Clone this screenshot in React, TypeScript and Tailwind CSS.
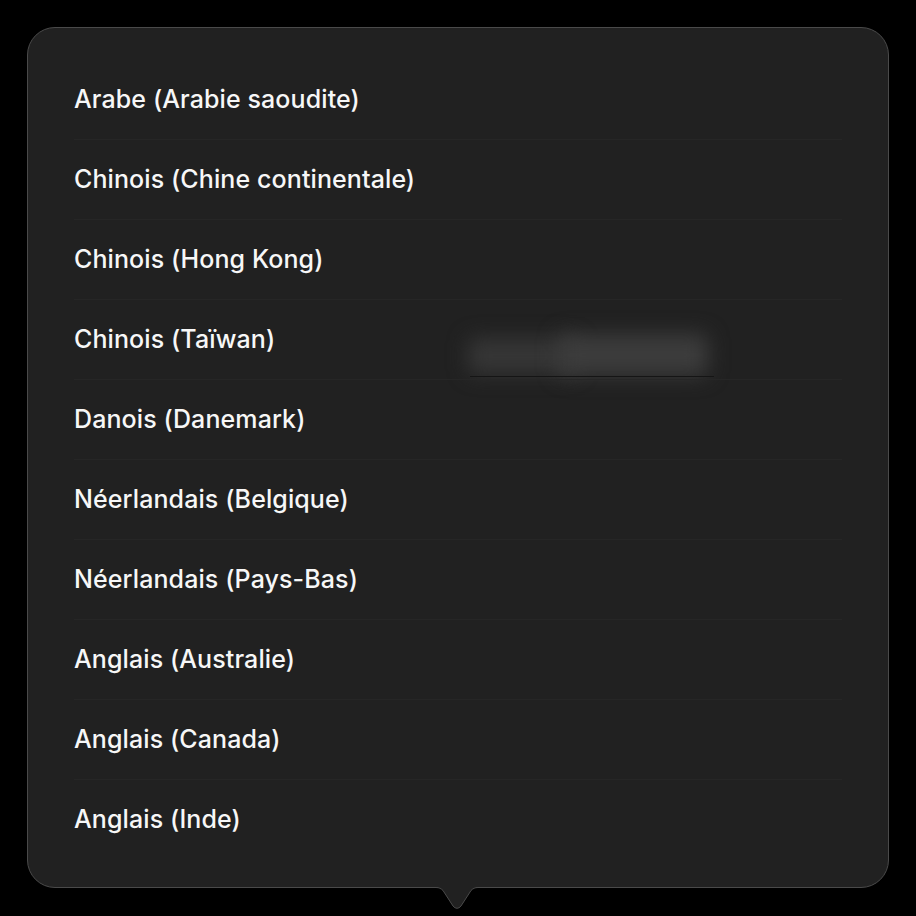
const languages = [
  "Arabe (Arabie saoudite)",
  "Chinois (Chine continentale)",
  "Chinois (Hong Kong)",
  "Chinois (Taïwan)",
  "Danois (Danemark)",
  "Néerlandais (Belgique)",
  "Néerlandais (Pays-Bas)",
  "Anglais (Australie)",
  "Anglais (Canada)",
  "Anglais (Inde)",
];

export default function App() {
  return (
    <div
      className="min-h-[916px] w-full bg-black px-[27px] pt-[27px]"
      style={{ fontFamily: "Inter, 'Noto Sans', sans-serif" }}
    >
      <div className="relative w-[862px]">
        <div className="relative overflow-hidden rounded-[28px] border border-[#4a4a4a] bg-[#212121] pb-[27px] pt-[32px]">
          {/* blurred content behind the popover */}
          <div className="pointer-events-none absolute left-[440px] top-[310px] h-[36px] w-[110px] rounded-lg bg-[#363636] blur-[10px]" />
          <div className="pointer-events-none absolute left-[530px] top-[306px] h-[42px] w-[150px] rounded-lg bg-[#3c3c3c] blur-[10px]" />
          <div className="pointer-events-none absolute left-[442px] top-[348px] h-px w-[244px] bg-[#151515]" />

          <ul className="relative">
            {languages.map((name, i) => (
              <li
                key={name}
                className={
                  "mx-[46px] flex h-[80px] items-center text-[25px] font-[450] tracking-[0.1px] text-[#f7f7f7] " +
                  (i < languages.length - 1 ? "border-b border-[#262626]" : "")
                }
              >
                {name}
              </li>
            ))}
          </ul>
        </div>
        {/* popover arrow */}
        <svg
          className="absolute left-[399px] top-[860px]"
          width="62"
          height="26"
          viewBox="0 0 62 26"
        >
          <path
            d="M0 0.5 H10 C13 0.5 15 1.5 17 3.5 L27 19 C29.5 22 32.5 22 35 19 L45 3.5 C47 1.5 49 0.5 52 0.5 H62 V0 H0 Z"
            fill="#212121"
          />
          <path
            d="M0 0.5 H10 C13 0.5 15 1.5 17 3.5 L27 19 C29.5 22 32.5 22 35 19 L45 3.5 C47 1.5 49 0.5 52 0.5 H62"
            fill="none"
            stroke="#4a4a4a"
            strokeWidth="1"
          />
        </svg>
      </div>
    </div>
  );
}
